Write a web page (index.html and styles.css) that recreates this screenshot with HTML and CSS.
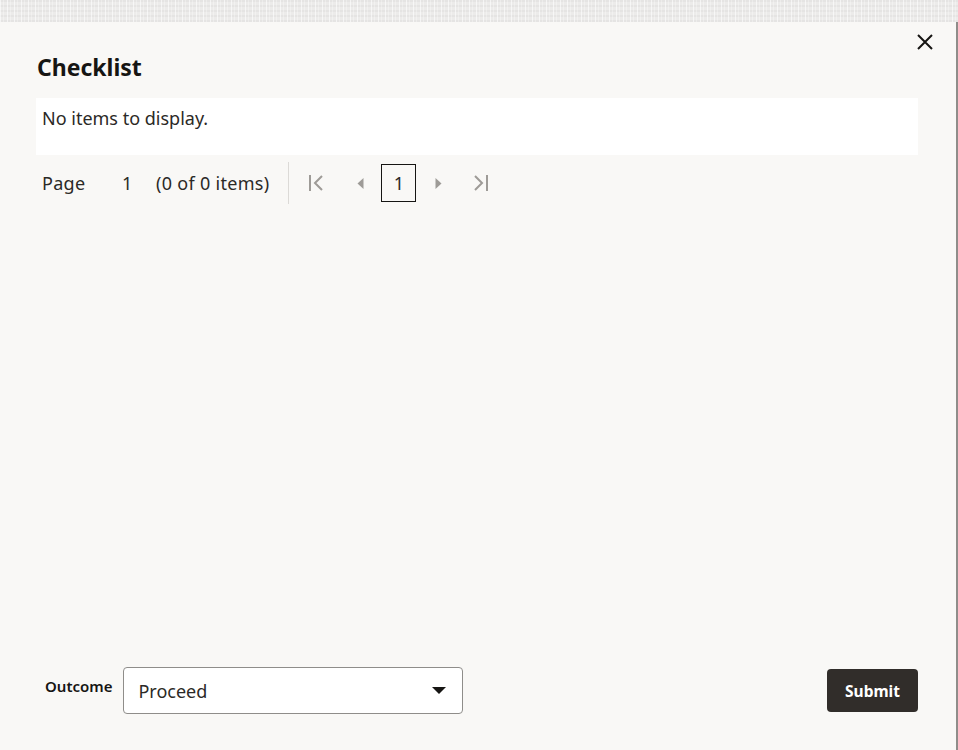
FILE: index.html
```html
<!DOCTYPE html>
<html lang="en">
<head>
<meta charset="UTF-8" />
<title>Checklist</title>
<link rel="stylesheet" href="styles.css">
</head>
<body>

<div class="backdrop"></div>

<!-- DIALOG -->
<div class="dialog">
  <button class="close-btn" title="Close">
    <svg width="18" height="18" viewBox="0 0 18 18"><path d="M2 2 L16 16 M16 2 L2 16" stroke="#161513" stroke-width="2" fill="none"/></svg>
  </button>

  <h1 class="title">Checklist</h1>

  <div class="table-empty">No items to display.</div>

  <div class="pager">
    <span class="pager-label">Page</span>
    <span class="pager-num">1</span>
    <span class="pager-count">(0 of 0 items)</span>
    <div class="pager-nav">
      <span class="nav-icon first">
        <svg width="16" height="16" viewBox="0 0 16 16"><path d="M2 0 V16 M14 1 L7 8 L14 15" stroke="#9e9b97" stroke-width="2" fill="none"/></svg>
      </span>
      <span class="nav-icon prev">
        <svg width="7" height="11" viewBox="0 0 7 11"><path d="M6.5 0 L0.5 5.5 L6.5 11 Z" fill="#9e9b97"/></svg>
      </span>
      <span class="page-box">1</span>
      <span class="nav-icon next">
        <svg width="7" height="11" viewBox="0 0 7 11"><path d="M0.5 0 L6.5 5.5 L0.5 11 Z" fill="#9e9b97"/></svg>
      </span>
      <span class="nav-icon last">
        <svg width="16" height="16" viewBox="0 0 16 16"><path d="M14 0 V16 M2 1 L9 8 L2 15" stroke="#9e9b97" stroke-width="2" fill="none"/></svg>
      </span>
    </div>
  </div>

  <div class="spacer"></div>

  <div class="footer">
    <div class="field">
      <label class="field-label">Outcome</label>
      <div class="select">
        <span>Proceed</span>
        <svg width="14" height="8" viewBox="0 0 14 8"><path d="M0 0 H14 L7 7 Z" fill="#161513"/></svg>
      </div>
    </div>
    <button class="submit-btn">Submit</button>
  </div>
</div>

</body>
</html>
```

FILE: styles.css
```css
* {
  box-sizing: border-box;
  margin: 0;
  padding: 0;
}
html, body {
  height: 100%;
}
body {
  display: flex;
  flex-direction: column;
  font-family: 'Noto Sans', 'Open Sans', sans-serif;
  color: #161513;
  background: #f9f8f6;
  overflow: hidden;
}
.backdrop {
  height: 22px;
  flex-shrink: 0;
  background-color: #ecebea;
  background-image:
    repeating-linear-gradient(90deg, rgba(255,255,255,0.6) 0 1px, transparent 1px 3px, rgba(255,255,255,0.3) 3px 4px, transparent 4px 7px),
    repeating-linear-gradient(0deg, rgba(0,0,0,0.03) 0 2px, transparent 2px 5px);
}

/* DIALOG */
.dialog {
  position: relative;
  flex: 1;
  display: flex;
  flex-direction: column;
  width: 958px;
  padding: 30px 38px 36px 36px;
  background: #f9f8f6;
  border-right: 2px solid #8f8d8a;
}
.close-btn {
  position: absolute;
  top: 8px;
  right: 19px;
  width: 24px;
  height: 24px;
  border: none;
  background: none;
  display: flex;
  align-items: center;
  justify-content: center;
  cursor: pointer;
}
.title {
  font-size: 23px;
  font-weight: 700;
  line-height: 30px;
  margin-bottom: 16px;
  margin-left: 1px;
}
.table-empty {
  background: #fff;
  height: 57px;
  padding: 8px 6px;
  font-size: 18px;
  line-height: 24px;
  color: #2b2926;
}

/* PAGER */
.pager {
  display: flex;
  align-items: center;
  height: 42px;
  margin-top: 7px;
  font-size: 18px;
  letter-spacing: 0.3px;
  color: #2b2926;
}
.pager-label {
  margin-left: 6px;
  width: 80px;
}
.pager-num {
  width: 34px;
}
.pager-count {
  margin-right: 19px;
}
.pager-nav {
  display: flex;
  align-items: center;
  height: 42px;
  border-left: 1px solid #dcdad7;
  padding-left: 18px;
}
.nav-icon {
  display: flex;
  align-items: center;
  justify-content: center;
  width: 18px;
}
.nav-icon.first {
  margin-right: 26px;
}
.nav-icon.prev {
  margin-right: 12px;
}
.nav-icon.next {
  margin-right: 25px;
}
.page-box {
  width: 35px;
  height: 38px;
  border: 1px solid #161513;
  display: flex;
  align-items: center;
  justify-content: center;
  margin-right: 13px;
  font-size: 18px;
}

.spacer {
  flex: 1;
}

/* FOOTER */
.footer {
  display: flex;
  align-items: center;
  justify-content: space-between;
}
.field {
  display: flex;
  align-items: flex-start;
  gap: 11px;
  margin-left: 9px;
}
.field-label {
  font-size: 15px;
  font-weight: 600;
  line-height: 20px;
  margin-top: 9px;
}
.select {
  width: 340px;
  height: 47px;
  background: #fff;
  border: 1px solid #8f8d8a;
  border-radius: 4px;
  display: flex;
  align-items: center;
  justify-content: space-between;
  padding: 0 16px 0 14px;
  font-size: 18px;
  color: #2b2926;
}
.submit-btn {
  width: 91px;
  height: 43px;
  border: none;
  border-radius: 4px;
  background: #312d2a;
  color: #fff;
  font-family: inherit;
  font-size: 15.5px;
  font-weight: 700;
  cursor: pointer;
}
```
